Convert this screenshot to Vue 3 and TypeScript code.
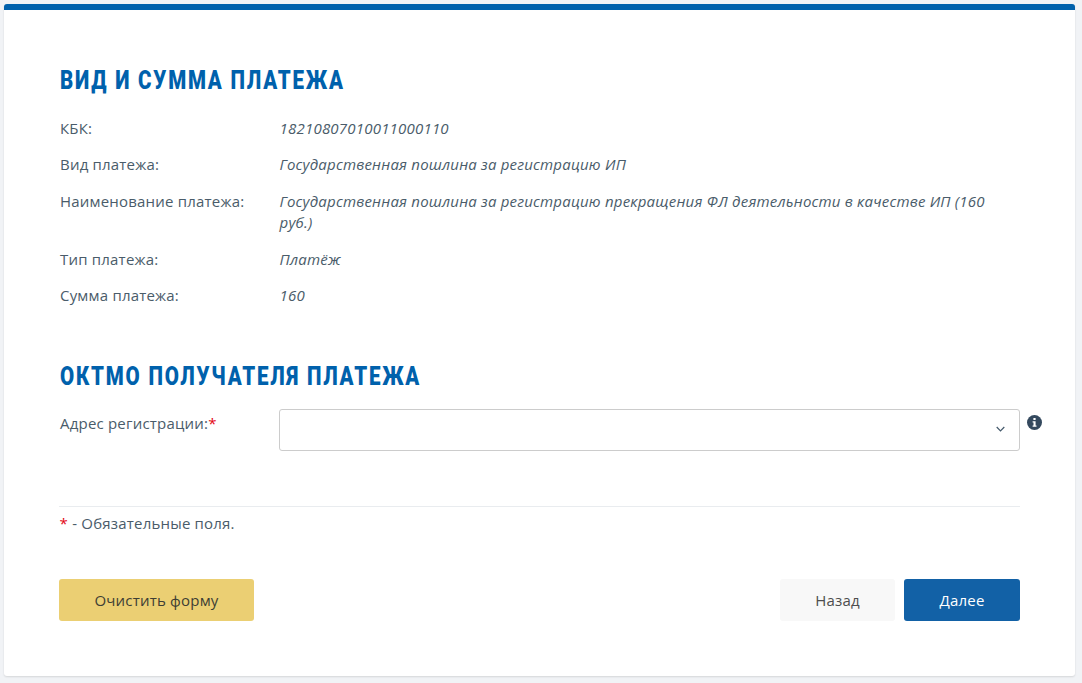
<script setup lang="ts">
const rows: { label: string; value: string }[] = [
  { label: 'КБК:', value: '18210807010011000110' },
  { label: 'Вид платежа:', value: 'Государственная пошлина за регистрацию ИП' },
  { label: 'Наименование платежа:', value: 'Государственная пошлина за регистрацию прекращения ФЛ деятельности в качестве ИП (160 руб.)' },
  { label: 'Тип платежа:', value: 'Платёж' },
  { label: 'Сумма платежа:', value: '160' },
]
</script>

<template>
  <main class="page">
    <section class="card">
      <h2 class="title first">ВИД И СУММА ПЛАТЕЖА</h2>
      <div class="rows">
        <div v-for="r in rows" :key="r.label" class="row">
          <div class="label">{{ r.label }}</div>
          <div class="value">{{ r.value }}</div>
        </div>
      </div>
      <h2 class="title second">ОКТМО ПОЛУЧАТЕЛЯ ПЛАТЕЖА</h2>
      <div class="field">
        <label class="label field-label">Адрес регистрации:<span class="req">*</span></label>
        <div class="select">
          <svg class="chev" width="9" height="6" viewBox="0 0 9 6"><path d="M.7 1l3.8 3.8L8.3 1" fill="none" stroke="#44596b" stroke-width="1.2"/></svg>
        </div>
        <svg class="info" width="15" height="15" viewBox="0 0 15 15">
          <circle cx="7.5" cy="7.5" r="7.5" fill="#34495e"/>
          <rect x="6.4" y="3" width="2.2" height="2" fill="#fff"/>
          <path d="M5.6 6.2h3v4.2h.9v1.3H5.6v-1.3h.9V7.5h-.9z" fill="#fff"/>
        </svg>
      </div>
      <div class="note"><span class="req">*</span> - Обязательные поля.</div>
      <div class="actions">
        <button class="btn clear">Очистить форму</button>
        <div class="nav">
          <button class="btn back">Назад</button>
          <button class="btn next">Далее</button>
        </div>
      </div>
    </section>
  </main>
</template>

<style>
html, body { margin: 0; background: #f1f3f6; }
</style>

<style scoped>
.page {
  box-sizing: border-box;
  height: 683px;
  padding: 4px 7px 7px 4px;
  font-family: "Open Sans", "Noto Sans", sans-serif;
  font-size: 15px;
  letter-spacing: .2px;
  color: #4a5c6a;
}
.card {
  box-sizing: border-box;
  height: 672px;
  background: #fff;
  border-top: 6px solid #0061ac;
  border-radius: 3px;
  box-shadow: 0 1px 2px rgba(0, 0, 0, .12);
  padding: 0 55px;
}
.title {
  margin: 0 0 0 1px;
  font-family: "Roboto", sans-serif;
  font-weight: 900;
  font-size: 25px;
  line-height: 30px;
  letter-spacing: 2.2px;
  color: #0061ac;
  transform: scaleX(.82);
  transform-origin: left center;
  white-space: nowrap;
}
.first { padding-top: 56px; }
.second { margin-top: 55.7px; }
.rows { margin-top: 21.6px; display: flex; flex-direction: column; gap: 15.2px; }
.row { display: flex; line-height: 21.4px; }
.label { width: 220.6px; flex: none; padding-left: 1px; box-sizing: border-box; }
.value { width: 720px; font-style: italic; }
.field { display: flex; margin-top: 17px; }
.field-label { width: 220px; padding-top: 4px; line-height: 21.4px; }
.req { color: #e30613; font-size: 15px; }
.select {
  box-sizing: border-box;
  flex: none;
  width: 741px;
  height: 42px;
  border: 1px solid #ccc;
  border-radius: 3px;
  display: flex;
  align-items: center;
  justify-content: flex-end;
  padding-right: 14px;
}
.chev { margin-top: -2px; }
.info { flex: none; margin: 6px 0 0 7px; }
.note {
  margin-top: 55px;
  width: 961px;
  border-top: 1px solid #e9ecef;
  padding: 6px 0 0 .6px;
  line-height: 21.4px;
  box-sizing: border-box;
}
.actions {
  display: flex;
  justify-content: space-between;
  width: 961px;
  margin-top: 44px;
}
.nav { display: flex; gap: 9px; }
.btn {
  height: 42px;
  border: 0;
  border-radius: 3px;
  font-family: inherit;
  font-size: 15px;
  letter-spacing: .2px;
  padding: 0;
}
.clear { width: 195px; background: #ebcf73; color: #3e3e34; }
.back { width: 115px; background: #f8f8f8; color: #4d4d4d; }
.next { width: 116px; background: #1261a6; color: #fff; }
</style>
